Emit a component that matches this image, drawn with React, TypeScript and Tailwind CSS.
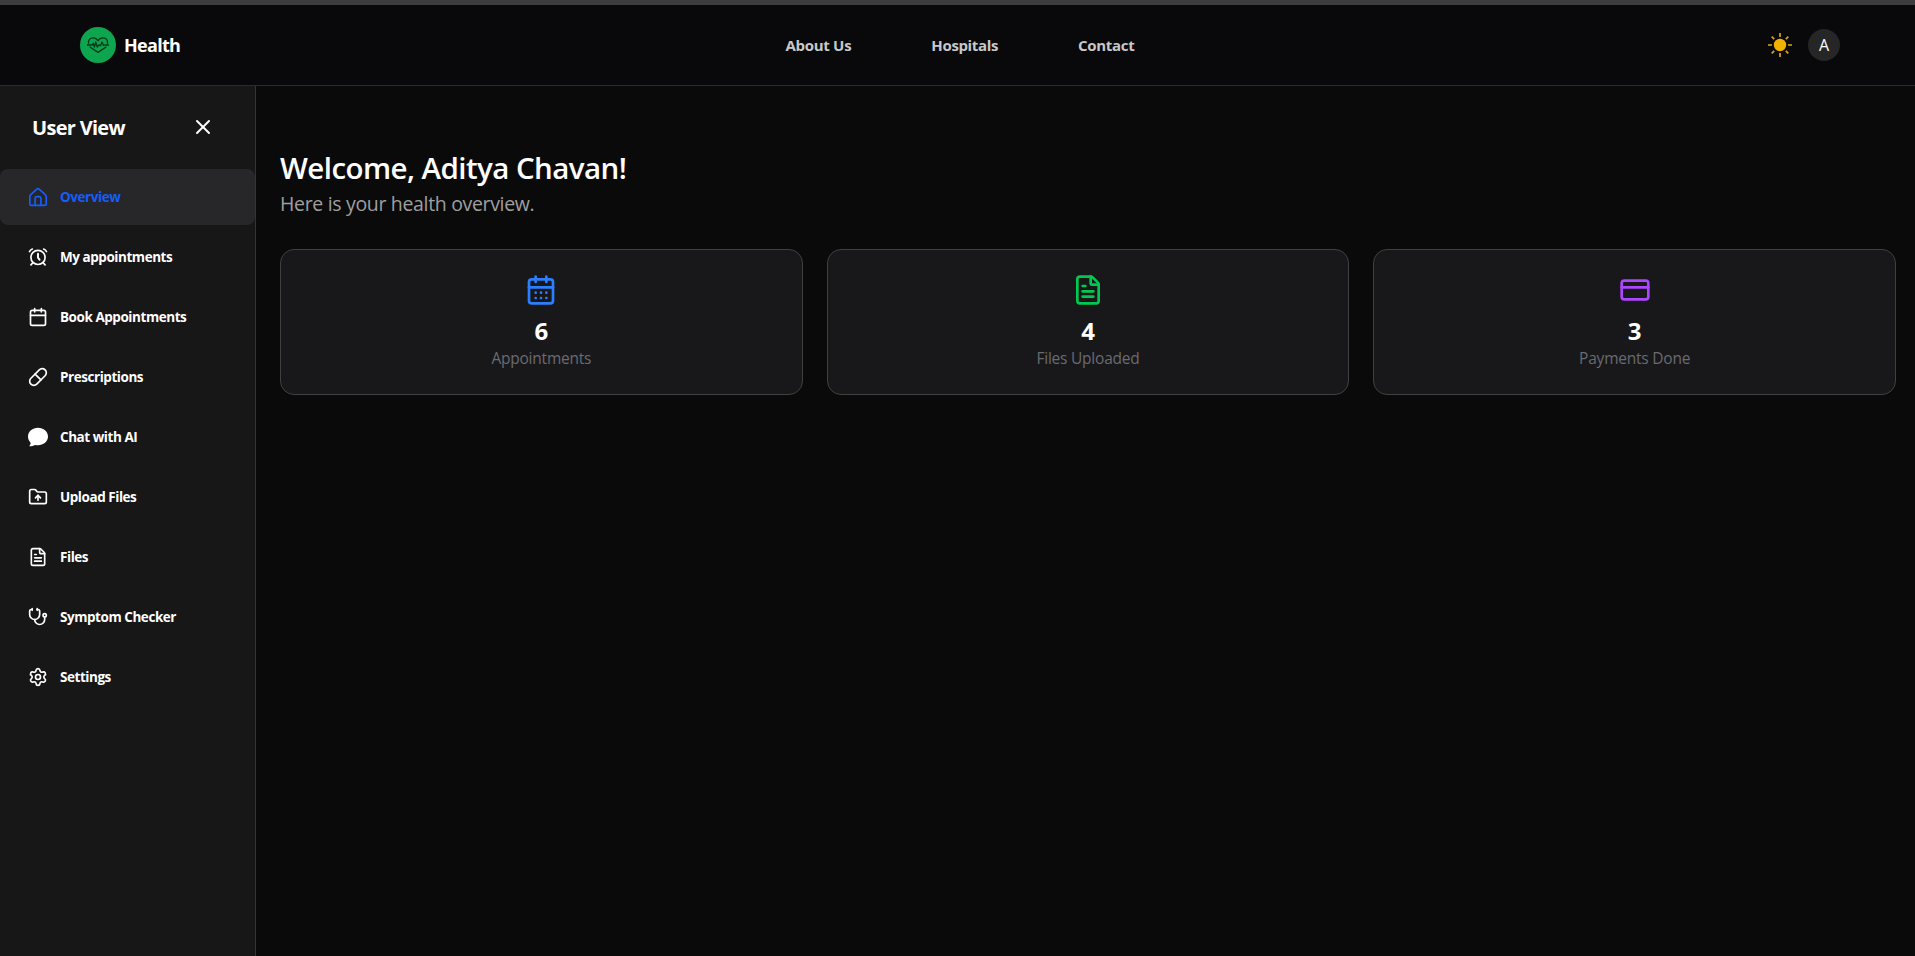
import React from "react";
import { Calendar, CalendarDays, CreditCard, FileText, FolderUp, Pill, Settings, Stethoscope, X } from "lucide-react";

const line = {
  fill: "none",
  stroke: "currentColor",
  strokeWidth: 2,
  strokeLinecap: "round" as const,
  strokeLinejoin: "round" as const,
};

const HomeIcon = () => (
  <svg className="size-5" viewBox="0 0 24 24" {...line}>
    <path d="M2.200 11.500c0-.9.4-1.700 1.100-2.300l7.300-6.600a2 2 0 0 1 2.800 0l7.300 6.600c.7.600 1.100 1.400 1.100 2.300V20a2 2 0 0 1-2 2H4.200a2 2 0 0 1-2-2z" />
    <path d="M8.500 22v-8a2.500 2.500 0 0 1 2.500-2.500h2a2.500 2.500 0 0 1 2.500 2.500v8" />
  </svg>
);

const AlarmIcon = () => (
  <svg className="size-5" viewBox="0 0 24 24" {...line}>
    <circle cx="12" cy="12.500" r="8.500" />
    <path d="M12 8v4.800l1.800 2.400" strokeWidth="2.300" />
    <path d="M6 18.800 3.500 21.500M18 18.800l2.500 2.700" />
    <path d="M1.800 5.500c.8-1.500 1.900-2.400 3.400-3M22.200 5.500c-.8-1.500-1.900-2.400-3.400-3" />
  </svg>
);

const ChatIcon = () => (
  <svg className="size-5" viewBox="0 0 20 20" fill="currentColor">
    <path d="M10 .8c5.500 0 10 3.800 10 8.700s-4.500 8.700-10 8.700c-1 0-2-.1-2.900-.3-1.500.8-3.500 1.400-5.500 1.400-.4 0-.5-.4-.2-.6.700-.7 1.200-1.700 1.200-3C.9 14 0 11.900 0 9.500 0 4.600 4.500.8 10 .8z" />
  </svg>
);

const SunIcon = () => (
  <svg className="size-6" viewBox="0 0 24 24" fill="#f0b100" stroke="#d9a514" strokeWidth="1.700">
    <circle cx="12" cy="12" r="6.200" stroke="none" />
    <path d="M12 0v4M12 20v4M0 12h4M20 12h4M3.700 3.700l2.500 2.500M17.800 17.800l2.500 2.500M3.700 20.300l2.500-2.500M17.800 6.200l2.500-2.500" />
  </svg>
);

const HeartPulseLogo = () => (
  <svg className="-mt-px h-4 w-[22px]" viewBox="0 0 22 16" fill="none" stroke="#06381a" strokeWidth="1.300" strokeLinejoin="round" strokeLinecap="round">
    <path d="M1.600 6.200C1 3 3.200.8 6 .8c2.200 0 4 1.200 5 2.900C12 2 13.800.8 16 .8c2.800 0 5 2.200 4.400 5.400M3 10l8 5.400 8-5.400" />
    <path d="M0 8h5l1.200-1.500L7.500 10l1.200-5 1.600 5 1.700-2.200 1.500 1 1.500-3.800 1.500 3.500L18 8h4" />
  </svg>
);

const items = [
  { label: "Overview", icon: <HomeIcon /> },
  { label: "My appointments", icon: <AlarmIcon /> },
  { label: "Book Appointments", icon: <Calendar size={20} /> },
  { label: "Prescriptions", icon: <Pill size={20} /> },
  { label: "Chat with AI", icon: <ChatIcon /> },
  { label: "Upload Files", icon: <FolderUp size={20} /> },
  { label: "Files", icon: <FileText size={20} /> },
  { label: "Symptom Checker", icon: <Stethoscope size={20} /> },
  { label: "Settings", icon: <Settings size={20} /> },
];

const cards = [
  { value: 6, label: "Appointments", icon: <CalendarDays size={32} className="text-[#2b7fff]" /> },
  { value: 4, label: "Files Uploaded", icon: <FileText size={32} className="text-[#00c950]" /> },
  { value: 3, label: "Payments Done", icon: <CreditCard size={32} className="text-[#ad46ff]" /> },
];

export default function App() {
  return (
    <div className="flex h-[956px] flex-col overflow-hidden bg-[#0a0a0a] font-['Open_Sans','Noto_Sans',sans-serif] text-white">
      <div className="h-[5px] shrink-0 bg-[#3c3c3e]" />
      <header className="grid h-[81px] shrink-0 grid-cols-[1fr_auto_1fr] items-center border-b border-[#2b2b2d] bg-[#09090b] pr-[75px] pl-20">
        <div className="flex items-center gap-2">
          <div className="flex size-9 items-center justify-center rounded-full bg-[#0da54e]">
            <HeartPulseLogo />
          </div>
          <span className="text-lg font-bold tracking-[-0.7px]">Health</span>
        </div>
        <nav className="flex gap-20 pt-px text-[15px] font-bold text-[#c8c8c8]">
          <span className="tracking-[-0.3px]">About Us</span>
          <span className="tracking-[-0.35px]">Hospitals</span>
          <span className="tracking-[-0.3px]">Contact</span>
        </nav>
        <div className="flex items-center justify-end gap-4">
          <SunIcon />
          <div className="flex size-8 items-center justify-center rounded-full bg-[#262626] text-base">A</div>
        </div>
      </header>
      <div className="flex min-h-0 flex-1">
        <aside className="w-64 shrink-0 border-r border-[#343436] bg-[#171717]">
          <div className="flex h-[83px] items-center justify-between pr-10 pl-8">
            <h2 className="pt-px text-xl font-bold tracking-[-0.7px]">User View</h2>
            <X size={24} className="-mt-0.5" />
          </div>
          <ul className="flex flex-col gap-1">
            {items.map((item, i) => (
              <li
                key={item.label}
                className={
                  i === 0
                    ? "flex h-14 items-center gap-3 rounded-lg bg-[#27272a] px-7 text-[#155dfc]"
                    : "flex h-14 items-center gap-3 rounded-lg px-7"
                }
              >
                {item.icon}
                <span className="pt-px text-[13.5px] font-bold tracking-[-0.45px]">{item.label}</span>
              </li>
            ))}
          </ul>
        </aside>
        <main className="flex-1 pt-16 pr-[19px] pl-6">
          <h1 className="text-[29.5px] leading-9 font-semibold tracking-[-0.56px]">Welcome, Aditya Chavan!</h1>
          <p className="mt-1 text-[19.5px] leading-7 tracking-[-0.33px] text-[#9f9fa0]">Here is your health overview.</p>
          <div className="mt-[31px] grid grid-cols-3 gap-6">
            {cards.map((card) => (
              <div key={card.label} className="flex h-[146px] flex-col items-center rounded-[14px] border border-[#404042] bg-[#18181b] pt-6">
                {card.icon}
                <span className="mt-[9px] text-2xl leading-8 font-bold">{card.value}</span>
                <span className="-mt-px text-[15.5px] leading-6 tracking-[-0.22px] text-[#6a6a70]">{card.label}</span>
              </div>
            ))}
          </div>
        </main>
      </div>
    </div>
  );
}
